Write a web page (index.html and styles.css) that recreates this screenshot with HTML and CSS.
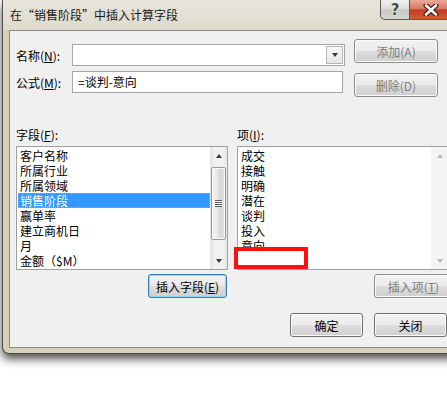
FILE: index.html
```html
<!DOCTYPE html>
<html lang="zh-CN">
<head>
    <meta charset="UTF-8">
    <title>插入计算字段</title>
    <link rel="stylesheet" href="styles.css">
</head>
<body>
    <div class="window">
        <div class="titlebar">
            <span class="title">在“销售阶段”中插入计算字段</span>
            <div class="caption-buttons">
                <span class="cap-btn help">?</span>
                <span class="cap-btn close">
                    <svg width="16" height="12" viewBox="0 0 16 12">
                        <path d="M3 1.5 L13 10.5 M13 1.5 L3 10.5" stroke="#3b1a14" stroke-width="5" stroke-linecap="round"/>
                        <path d="M3 1.5 L13 10.5 M13 1.5 L3 10.5" stroke="#ffffff" stroke-width="2.6" stroke-linecap="round"/>
                    </svg>
                </span>
            </div>
        </div>

        <div class="client">
            <div class="top">
                <div class="form">
                    <label>名称(<u>N</u>):</label>
                    <div class="combo">
                        <span class="combo-btn"><i class="tri down dark"></i></span>
                    </div>
                    <label>公式(<u>M</u>):</label>
                    <div class="textbox">=谈判-意向</div>
                </div>
                <div class="side-buttons">
                    <button class="btn disabled">添加(A)</button>
                    <button class="btn disabled">删除(D)</button>
                </div>
            </div>

            <div class="lists">
                <div class="col">
                    <div class="col-label">字段(<u>F</u>):</div>
                    <div class="listbox">
                        <ul class="items">
                            <li>客户名称</li>
                            <li>所属行业</li>
                            <li>所属领域</li>
                            <li class="selected">销售阶段</li>
                            <li>赢单率</li>
                            <li>建立商机日</li>
                            <li>月</li>
                            <li>金额（$M）</li>
                        </ul>
                        <div class="scrollbar">
                            <span class="sb-arrow"><i class="tri up dark"></i></span>
                            <div class="sb-track">
                                <div class="sb-thumb"><i class="grip"></i></div>
                            </div>
                            <span class="sb-arrow"><i class="tri down dark"></i></span>
                        </div>
                    </div>
                    <button class="btn default insert-field">插入字段(<u>E</u>)</button>
                </div>

                <div class="col">
                    <div class="col-label">项(<u>I</u>):</div>
                    <div class="listbox">
                        <ul class="items">
                            <li>成交</li>
                            <li>接触</li>
                            <li>明确</li>
                            <li>潜在</li>
                            <li>谈判</li>
                            <li>投入</li>
                            <li>意向</li>
                        </ul>
                        <div class="scrollbar off">
                            <span class="sb-arrow"><i class="tri up"></i></span>
                            <div class="sb-track"></div>
                            <span class="sb-arrow"><i class="tri down"></i></span>
                        </div>
                        <div class="mark"></div>
                    </div>
                    <button class="btn disabled insert-item">插入项(<u>T</u>)</button>
                </div>
            </div>

            <div class="footer">
                <button class="btn">确定</button>
                <button class="btn">关闭</button>
            </div>
        </div>
    </div>
</body>
</html>
```

FILE: styles.css
```css
html, body {
    margin: 0;
    padding: 0;
}
body {
    width: 447px;
    height: 397px;
    overflow: hidden;
    background: #ffffff;
    font-family: "Noto Sans CJK SC", "Liberation Sans", sans-serif;
    font-size: 12px;
    color: #000;
}
.window {
    margin-left: 2px;
    width: 455px;
    background: #d6d0b6;
    border: 1px solid #4e4e4e;
    border-top: none;
    border-radius: 0 0 7px 7px;
    box-shadow: 0 5px 10px rgba(0,0,0,0.7);
}
.titlebar {
    height: 30px;
    display: flex;
    align-items: flex-start;
    background: linear-gradient(#e7e5dc, #dedacc);
}
.title {
    padding-left: 7px;
    line-height: 30px;
    font-size: 12px;
    color: #1a1a1a;
}
.caption-buttons {
    margin-left: auto;
    margin-right: 6px;
    display: flex;
}
.cap-btn {
    height: 20px;
    display: flex;
    align-items: center;
    justify-content: center;
    border: 1px solid #5a5a5a;
    border-top: none;
    box-sizing: border-box;
}
.help {
    width: 29px;
    border-right: none;
    border-radius: 0 0 0 5px;
    background: linear-gradient(#f1f1ee, #dcdcd7 48%, #c9c9c3 52%, #d8d8d2);
    font: bold 15px "DejaVu Sans", sans-serif;
    color: #4a4a4a;
    text-shadow: 0 0 1px #fff, 0 0 2px #fff;
}
.close {
    width: 43px;
    border-radius: 0 0 5px 0;
    background: linear-gradient(#eaa999, #d97a67 45%, #c43b23 52%, #d55b3d);
}
.client {
    margin: 0 6px 5px;
    height: 316px;
    background: #f0f0f0;
    border: 1px solid #8a8a8a;
    overflow: hidden;
}
.top {
    display: flex;
    padding: 8px 0 0 6px;
}
.form {
    padding-top: 5px;
    display: grid;
    grid-template-columns: 56px 273px;
    grid-template-rows: 22px 22px;
    row-gap: 5px;
    align-items: center;
}
.combo, .textbox {
    height: 22px;
    box-sizing: border-box;
    background: #fff;
    border: 1px solid #a6a6a6;
}
.combo {
    display: flex;
    justify-content: flex-end;
    padding: 1px;
}
.combo-btn {
    width: 17px;
    box-sizing: border-box;
    border: 1px solid #b4b4b4;
    background: linear-gradient(#f7f7f7, #e6e6e6);
    display: flex;
    align-items: center;
    justify-content: center;
}
.textbox {
    width: 271px;
    padding-left: 5px;
    line-height: 20px;
}
.side-buttons {
    margin-left: 9px;
    display: flex;
    flex-direction: column;
    gap: 10px;
}
.btn {
    height: 24px;
    width: 73px;
    padding: 0;
    font: 12px "Noto Sans CJK SC", "Liberation Sans", sans-serif;
    color: #000;
    border: 1px solid #707070;
    border-radius: 3px;
    background: linear-gradient(#f2f2f2, #ebebeb 48%, #dddddd 52%, #cfcfcf);
    box-shadow: inset 0 0 0 1px #fbfbfb;
}
.side-buttons .btn {
    width: 84px;
}
.btn.disabled {
    color: #7d7d7d;
    border-color: #8c8c8c;
}
.btn.default {
    border-color: #3c7fb1;
    box-shadow: inset 0 0 0 1px #8fd3f5;
}
.lists {
    margin-top: 30px;
    padding-left: 6px;
    display: grid;
    grid-template-columns: 212px 212px;
    column-gap: 9px;
}
.col {
    display: flex;
    flex-direction: column;
}
.col-label {
    line-height: 15px;
    margin-bottom: 4px;
}
.listbox {
    position: relative;
    height: 124px;
    box-sizing: border-box;
    border: 1px solid #a0a0a0;
    background: #fff;
    display: flex;
}
.items {
    flex: 1;
    list-style: none;
    margin: 0;
    padding: 1px 0 0 1px;
}
.items li {
    height: 15px;
    line-height: 15px;
    padding-left: 1px;
    border: 1px solid transparent;
    border-width: 0 1px;
    white-space: nowrap;
}
.items li.selected {
    background: #3399ff;
    color: #fff;
    outline: 1px dotted #f29a3c;
    outline-offset: -1px;
}
.scrollbar {
    width: 17px;
    display: flex;
    flex-direction: column;
    background: linear-gradient(90deg, #e3e3e3, #f2f2f2 30%, #f2f2f2 70%, #e8e8e8);
}
.scrollbar.off {
    background: #f4f4f4;
}
.sb-arrow {
    height: 17px;
    display: flex;
    align-items: center;
    justify-content: center;
}
.sb-track {
    flex: 1;
    padding: 3px 1px 0;
}
.sb-thumb {
    height: 71px;
    border: 1px solid #979797;
    border-radius: 2px;
    background: linear-gradient(90deg, #f4f4f4, #e8e8e8 45%, #d8d8d8 55%, #e0e0e0);
    box-shadow: inset 0 0 0 1px #f8f8f8;
    display: flex;
    align-items: center;
    justify-content: center;
}
.grip {
    width: 7px;
    height: 7px;
    background: repeating-linear-gradient(#5f5f5f 0 1px, #f0f0f0 1px 2px);
}
.tri {
    width: 0;
    height: 0;
    border-left: 3.5px solid transparent;
    border-right: 3.5px solid transparent;
}
.tri.up {
    border-bottom: 4px solid #b8b8b8;
}
.tri.down {
    border-top: 4px solid #b8b8b8;
}
.tri.up.dark {
    border-bottom-color: #3a3a3a;
}
.tri.down.dark {
    border-top-color: #3a3a3a;
}
.mark {
    position: absolute;
    left: -4px;
    top: 100px;
    width: 66px;
    height: 14px;
    border: 4px solid #ff1010;
    background: #fff;
}
.col .btn {
    margin-top: 4px;
    width: 79px;
}
.insert-field {
    align-self: flex-end;
    margin-right: 1px;
}
.insert-item {
    margin-left: 137px;
}
.footer {
    margin-top: 15px;
    padding-left: 280px;
    display: flex;
    gap: 11px;
}
```
